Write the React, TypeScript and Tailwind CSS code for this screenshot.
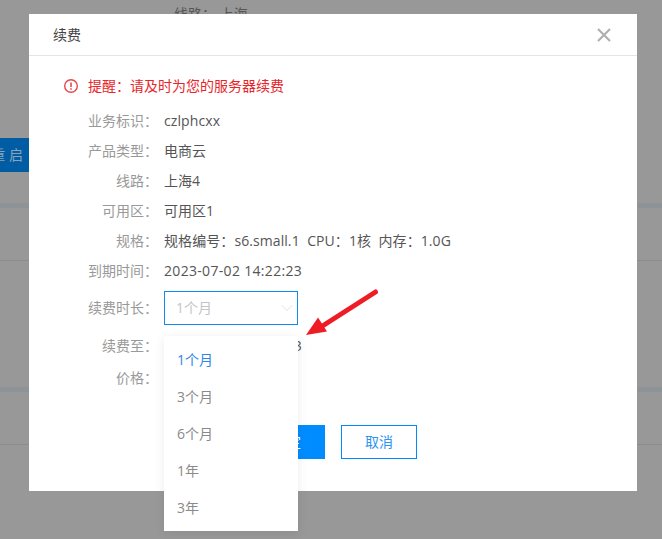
import { ChevronDown } from 'lucide-react';

const infoRows = [
  { label: '业务标识：', text: 'czlphcxx', cls: 'tracking-[0.1px]' },
  { label: '产品类型：', text: '电商云', cls: '' },
  { label: '线路：', text: '上海4', cls: '' },
  { label: '可用区：', text: '可用区1', cls: '' },
  { label: '规格：', text: '规格编号：s6.small.1  CPU：1核  内存：1.0G', cls: 'tracking-[0.08px]' },
  { label: '到期时间：', text: '2023-07-02 14:22:23', cls: 'tracking-[0.32px]' },
];

const options = ['1个月', '3个月', '6个月', '1年', '3年'];

const fontStack = "font-['Open_Sans','Noto_Sans_CJK_SC',sans-serif]";

const App = () => {
  return (
    <div className={`relative h-[539px] w-[662px] overflow-hidden bg-[#989898] text-sm ${fontStack}`}>
      {/* page behind the mask */}
      <div className="flex h-full flex-col">
        <div className="ml-[174px] h-[138px] leading-[28px] text-[#555555]">线路： 上海</div>
        <div className="flex h-[34px] w-[29px] shrink-0 items-center justify-end overflow-hidden whitespace-nowrap bg-[#005da3] pr-[6px] text-[#8aa3b8]">重 启</div>
        <div className="mt-[31px] h-[5px] shrink-0 bg-[#8e9397]" />
        <div className="mt-[52px] h-px shrink-0 bg-[#8a8d90]" />
        <div className="mt-[126px] h-[5px] shrink-0 bg-[#8e9397]" />
        <div className="mt-[52px] h-px shrink-0 bg-[#8a8d90]" />
      </div>

      {/* modal */}
      <div className="absolute left-[29px] top-[14px] flex h-[477px] w-[608px] flex-col bg-white">
        <div className="flex h-[42px] shrink-0 items-center justify-between border-b border-[#e5e5e5] pl-6 pr-[25px]">
          <span className="text-[#444444]">续费</span>
          <svg width="16" height="16" viewBox="0 0 16 16" fill="none" className="mt-px">
            <path d="M2 2 L14 14 M14 2 L2 14" stroke="#b0b0b0" strokeWidth="2.2" />
          </svg>
        </div>

        <div className="flex flex-1 flex-col pt-[19px]">
          <div className="flex h-[22px] items-center pl-[34px] text-[#e6252b]">
            <svg width="16" height="16" viewBox="0 0 16 16" fill="none" className="mr-[9px] shrink-0">
              <circle cx="8" cy="8" r="6.3" stroke="#e5484d" strokeWidth="1.4" />
              <path d="M8 4.4v4.6" stroke="#e5484d" strokeWidth="1.6" />
              <path d="M8 10.2v1.6" stroke="#e5484d" strokeWidth="1.6" />
            </svg>
            提醒：请及时为您的服务器续费
          </div>

          <div className="mt-[9px] flex flex-col">
            {infoRows.map((row) => (
              <div key={row.label} className="flex h-[30px] items-center">
                <span className="w-[129px] shrink-0 text-right text-[#999999]">{row.label}</span>
                <span className={`ml-[6px] whitespace-pre text-[#555555] ${row.cls}`}>{row.text}</span>
              </div>
            ))}
          </div>

          <div className="mt-[5px] flex h-[34px] items-center">
            <span className="w-[129px] shrink-0 text-right text-[#999999]">续费时长：</span>
            <div className="ml-[6px] flex h-[34px] w-[134px] items-center justify-between border border-[#0f8bf0] pl-[11px] text-[#c4c4c4]">
              1个月
              <ChevronDown size={20} strokeWidth={1} className="text-[#dcdcdc]" />
            </div>
          </div>

          <div className="mt-[5px] flex h-[32px] items-center">
            <span className="w-[129px] shrink-0 text-right text-[#999999]">续费至：</span>
            <span className="ml-[6px] tracking-[0.32px] text-[#555555]">2023-08-02 14:22:23</span>
          </div>
          <div className="flex h-[32px] items-center">
            <span className="w-[129px] shrink-0 text-right text-[#999999]">价格：</span>
          </div>

          <div className="mt-[31px] flex pl-[220px]">
            <button className="h-[34px] w-[76px] bg-[#008cff] text-white">确定</button>
            <button className="ml-[16px] h-[34px] w-[76px] border border-[#008cff] text-[#2b95f0]">取消</button>
          </div>
        </div>
      </div>

      {/* select dropdown */}
      <div className="absolute left-[164px] top-[336px] flex w-[134px] flex-col bg-white py-[5px] shadow-[0_2px_10px_rgba(0,0,0,0.08)]">
        {options.map((opt, i) => (
          <div key={opt} className={`flex h-[37px] items-center pl-[13px] ${i === 0 ? 'text-[#2f86e8]' : 'text-[#8a8a8a]'}`}>
            {opt}
          </div>
        ))}
      </div>

      {/* red annotation arrow */}
      <svg className="absolute left-[300px] top-[280px]" width="90" height="70" viewBox="0 0 90 70" fill="none">
        <path d="M75.5 12 L24 45" stroke="#ee1c25" strokeWidth="5" strokeLinecap="round" />
        <path d="M6 55 L18 37.5 L27 51.5 Z" fill="#ee1c25" />
      </svg>
    </div>
  );
};

export default App;
